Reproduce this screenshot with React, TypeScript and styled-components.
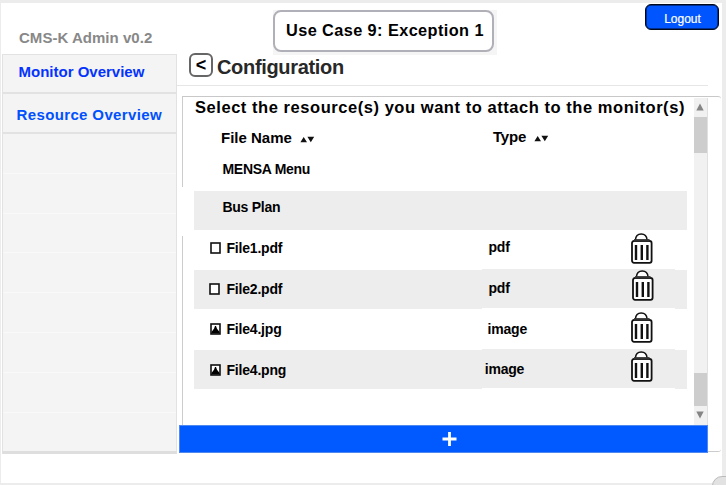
import React from "react";
import styled, { createGlobalStyle } from "styled-components";

const GlobalStyle = createGlobalStyle`
  * { box-sizing: border-box; }
  body {
    margin: 0;
    background: #ececec;
    color: #000;
    font-family: "Liberation Sans", Arial, sans-serif;
    font-weight: 700;
    overflow: hidden;
  }
`;

const Frame = styled.div`
  position: relative;
  width: 726px;
  height: 485px;
  padding: 3px 4px 2px 1px;
  overflow: hidden;
`;

const Page = styled.div`
  display: grid;
  grid-template-columns: 176px 1fr;
  width: 721px;
  height: 480px;
  background: #fff;
`;

const Text = styled.span<{ $size: number; $spacing?: number; $color?: string }>`
  display: block;
  white-space: nowrap;
  font-size: ${(p) => p.$size}px;
  line-height: 20px;
  letter-spacing: ${(p) => p.$spacing ?? 0}px;
  color: ${(p) => p.$color ?? "#000"};
`;

const Sidebar = styled.aside`
  display: flex;
  flex-direction: column;
  padding: 0 0 0 1px;
`;

const Brand = styled.div`
  height: 51px;
  padding: 25px 0 0 17px;
`;

const Nav = styled.nav`
  height: 400px;
  background: #f4f4f4;
  border: 1px solid #e2e2e2;
  border-bottom: 3px solid #dedede;
`;

const NavItem = styled.a<{ $indent: number; $top: number; $height: number }>`
  display: block;
  height: ${(p) => p.$height}px;
  padding: ${(p) => p.$top}px 0 0 ${(p) => p.$indent}px;
  border-bottom: 2px solid #e2e2e2;
`;

const NavSlot = styled.div`
  height: 39.8px;
  border-bottom: 1px solid #f9f9f9;
`;

const Main = styled.main`
  display: flex;
  flex-direction: column;
`;

const TopBar = styled.header`
  display: flex;
  justify-content: space-between;
  height: 50px;
  padding: 1px 3px 0 96px;
`;

const CaseBackdrop = styled.div`
  width: 224px;
  height: 45px;
  margin-top: 6px;
  background: #f5f5f5;
`;

const CaseLabel = styled.div`
  width: 221px;
  height: 42px;
  padding: 8px 0 0 11px;
  background: #fff;
  border: 2px solid #b0b0b8;
  border-radius: 8px;
`;

const LogoutButton = styled.button`
  display: flex;
  justify-content: center;
  align-items: center;
  width: 74px;
  height: 26px;
  padding: 3px 0 0 1px;
  background: #0055ff;
  border: 1px solid #00081c;
  box-shadow: inset 0 0 0 0.5px #00081c;
  border-radius: 6px;
  font-family: inherit;
  -webkit-text-stroke: 0.2px #fff;
`;

const Heading = styled.div`
  display: flex;
  height: 33px;
  width: 531px;
  padding-left: 12px;
  border-bottom: 1px solid #e6e6e6;
`;

const BackButton = styled.button`
  display: flex;
  justify-content: center;
  align-items: center;
  width: 24px;
  height: 24px;
  padding: 0;
  background: #fff;
  border: 2px solid #666;
  border-radius: 6px;
  font-family: inherit;
  font-weight: 700;
`;

const Title = styled.div`
  padding: 4px 0 0 4px;
`;

const Panel = styled.section`
  display: flex;
  justify-content: space-between;
  width: 539px;
  height: 329px;
  margin: 10px 0 0 5px;
  padding-right: 13px;
  border-top: 1px solid #c8c8c8;
  border-top-right-radius: 3px;
`;

const Edge = styled.div`
  width: 1px;
  padding-top: 1px;
  background: linear-gradient(#ccc 90px, #fff 90px, #fff 139px, #ccc 139px);
`;

const Listing = styled.div`
  flex: 1;
  padding-left: 11px;
`;

const Instruction = styled.div`
  height: 29px;
  padding: 0 0 0 1px;
`;

const Row = styled.div<{ $height: number; $shaded?: boolean }>`
  display: grid;
  grid-template-columns: 288px 193px 12px;
  width: 493px;
  height: ${(p) => p.$height}px;
  --fill: ${(p) => (p.$shaded ? "#ededed" : "transparent")};
`;

const Cell = styled.div<{ $left?: number; $top: number; $lift?: boolean }>`
  display: flex;
  align-items: flex-start;
  padding: ${(p) => p.$top}px 0 0 ${(p) => p.$left ?? 0}px;
  margin: ${(p) => (p.$lift ? "-1px 0 1px" : "0")};
  background: var(--fill);
`;

const IconSlot = styled.span<{ $left?: number; $top?: number }>`
  display: flex;
  flex: none;
  margin: ${(p) => p.$top ?? 0}px 0 0 ${(p) => p.$left ?? 0}px;
`;

const TypeLabel = styled.div`
  width: 142px;
  flex: none;
`;

const Scrollbar = styled.div`
  display: flex;
  flex-direction: column;
  justify-content: space-between;
  width: 14px;
  margin-top: 1px;
  background: #f1f1f1;
  border-right: 1px solid #e0e0e0;
`;

const ScrollGroup = styled.div`
  display: flex;
  flex-direction: column;
`;

const Thumb = styled.div<{ $height: number }>`
  height: ${(p) => p.$height}px;
  background: #cdcdcd;
`;

const ArrowBox = styled.div<{ $nudge?: number }>`
  display: flex;
  justify-content: center;
  align-items: center;
  height: 19px;
  padding: 0 1px ${(p) => p.$nudge ?? 0}px 0;
`;

const BottomRow = styled.div`
  display: flex;
  padding-left: 2px;
`;

const AddButton = styled.button`
  display: flex;
  justify-content: center;
  align-items: center;
  width: 529px;
  height: 28px;
  padding: 0 0 0 11px;
  background: #005aff;
  border: 1px solid #4f88ee;
`;

const PanelFoot = styled.div`
  width: 13px;
  height: 27px;
  border-bottom: 1px solid #ccc;
  border-bottom-right-radius: 3px;
`;

const CornerPill = styled.div`
  position: absolute;
  left: 712px;
  top: 476px;
  width: 40px;
  height: 24px;
  background: #e2e2e2;
  border: 1px solid #bbb;
  border-radius: 10px;
`;

const SortIcon = () => (
  <svg width="15" height="7" viewBox="0 0 15 7">
    <path d="M.4 6.3 3.7 1 7 6.3ZM7.4.8h6.8L10.8 6.3Z" fill="#111" />
  </svg>
);

const FileIcon = ({ image }: { image?: boolean }) => (
  <svg width="11" height="12" viewBox="0 0 11 12">
    <rect x="1" y="1" width="9" height="10" fill="#fff" stroke="#111" strokeWidth="1.6" />
    {image && <path d="M1.5 10.5V9L2.8 7.2 4 5.8 5 3h1L7 5.8l1.2 1.4L9.6 9v1.5Z" fill="#000" />}
  </svg>
);

const TrashIcon = () => (
  <svg width="22" height="31" viewBox="0 0 22 31" fill="none" stroke="#111">
    <path d="M4.4 7C4.7 3 7 1 10.2 1S15.8 3 16.1 7" strokeWidth="1.5" fill="#fff" />
    <rect x="1" y="8" width="19.6" height="21.8" rx="2" strokeWidth="1.8" fill="#fff" />
    <path d="M3 7.4h15.6" stroke="#333" strokeWidth="2.6" />
    <path d="M5 12v15M10.8 12v15M16.4 12v15" strokeWidth="2.4" />
  </svg>
);

const Arrow = ({ down }: { down?: boolean }) => (
  <svg width="8" height="8" viewBox="0 0 8 8">
    <path d={down ? "M.3.5h7.4L4 7.5Z" : "M.3 7.5h7.4L4 .5Z"} fill="#858585" />
  </svg>
);

type Resource = {
  name: string;
  type: string;
  height: number;
  shaded?: boolean;
  image?: boolean;
  nameTop: number;
  typeLeft: number;
  typeTop: number;
  iconLeft: number;
  trashLeft: number;
  trashTop: number;
};

const resources: Resource[] = [
  { name: "File1.pdf", type: "pdf", height: 40, nameTop: 8, typeLeft: 6.5, typeTop: 8, iconLeft: 16, trashLeft: 0.5, trashTop: 4 },
  { name: "File2.pdf", type: "pdf", height: 39, shaded: true, nameTop: 9, typeLeft: 6.5, typeTop: 9, iconLeft: 15, trashLeft: 1.5, trashTop: 1 },
  { name: "File4.jpg", type: "image", height: 41, image: true, nameTop: 10, typeLeft: 5.5, typeTop: 11, iconLeft: 16, trashLeft: 1.5, trashTop: 3.5 },
  { name: "File4.png", type: "image", height: 39, shaded: true, image: true, nameTop: 10, typeLeft: 2.7, typeTop: 10, iconLeft: 16, trashLeft: 4.3, trashTop: 1.5 },
];

export default function App() {
  return (
    <>
      <GlobalStyle />
      <Frame>
        <Page>
          <Sidebar>
            <Brand>
              <Text $size={15} $spacing={0.03} $color="#888">CMS-K Admin v0.2</Text>
            </Brand>
            <Nav>
              <NavItem $indent={15.5} $top={7} $height={39}>
                <Text $size={15} $color="#0433ff">Monitor Overview</Text>
              </NavItem>
              <NavItem $indent={13.5} $top={11} $height={40}>
                <Text $size={15} $spacing={0.37} $color="#0050ff">Resource Overview</Text>
              </NavItem>
              {[0, 1, 2, 3, 4, 5, 6].map((n) => (
                <NavSlot key={n} />
              ))}
            </Nav>
          </Sidebar>
          <Main>
            <TopBar>
              <CaseBackdrop>
                <CaseLabel>
                  <Text $size={16.3} $spacing={0.42}>Use Case 9: Exception 1</Text>
                </CaseLabel>
              </CaseBackdrop>
              <LogoutButton>
                <Text $size={12} $color="#fff">Logout</Text>
              </LogoutButton>
            </TopBar>
            <Heading>
              <BackButton>
                <Text $size={18}>&lt;</Text>
              </BackButton>
              <Title>
                <Text $size={20} $spacing={-0.33} $color="#282828">Configuration</Text>
              </Title>
            </Heading>
            <Panel>
              <Edge />
              <Listing>
                <Instruction>
                  <Text $size={16.5} $spacing={0.55}>
                    Select the resource(s) you want to attach to the monitor(s)
                  </Text>
                </Instruction>
                <Row $height={33}>
                  <Cell $left={27} $top={2}>
                    <Text $size={15}>File Name</Text>
                    <IconSlot $left={8} $top={8}><SortIcon /></IconSlot>
                  </Cell>
                  <Cell $left={11} $top={2} $lift>
                    <Text $size={15} $spacing={-0.2}>Type</Text>
                    <IconSlot $left={7.5} $top={8}><SortIcon /></IconSlot>
                  </Cell>
                </Row>
                <Row $height={32}>
                  <Cell $left={28.5} $top={0}><Text $size={14} $spacing={-0.3}>MENSA Menu</Text></Cell>
                </Row>
                <Row $height={39} $shaded>
                  <Cell $left={28.5} $top={6}><Text $size={14} $spacing={-0.27}>Bus Plan</Text></Cell>
                  <Cell $top={0} />
                  <Cell $top={0} />
                </Row>
                {resources.map((r) => (
                  <Row key={r.name} $height={r.height} $shaded={r.shaded}>
                    <Cell $left={r.iconLeft} $top={r.nameTop}>
                      <IconSlot $top={4}><FileIcon image={r.image} /></IconSlot>
                      <IconSlot $left={21.5 - r.iconLeft}>
                        <Text $size={14} $spacing={-0.2}>{r.name}</Text>
                      </IconSlot>
                    </Cell>
                    <Cell $left={r.typeLeft} $top={0} $lift>
                      <TypeLabel>
                        <IconSlot $top={r.typeTop}>
                          <Text $size={14} $spacing={-0.2}>{r.type}</Text>
                        </IconSlot>
                      </TypeLabel>
                      <IconSlot $left={r.trashLeft} $top={r.trashTop}><TrashIcon /></IconSlot>
                    </Cell>
                    <Cell $top={0} />
                  </Row>
                ))}
              </Listing>
              <Scrollbar>
                <ScrollGroup>
                  <ArrowBox $nudge={2}><Arrow /></ArrowBox>
                  <Thumb $height={36} />
                </ScrollGroup>
                <ScrollGroup>
                  <Thumb $height={33} />
                  <ArrowBox $nudge={2}><Arrow down /></ArrowBox>
                </ScrollGroup>
              </Scrollbar>
            </Panel>
            <BottomRow>
              <AddButton aria-label="Add">
                <svg width="16" height="16" viewBox="0 0 16 16">
                  <path d="M8.5 1v14M1.5 8h14" stroke="#fff" strokeWidth="2.8" />
                </svg>
              </AddButton>
              <PanelFoot />
            </BottomRow>
          </Main>
        </Page>
        <CornerPill />
      </Frame>
    </>
  );
}
